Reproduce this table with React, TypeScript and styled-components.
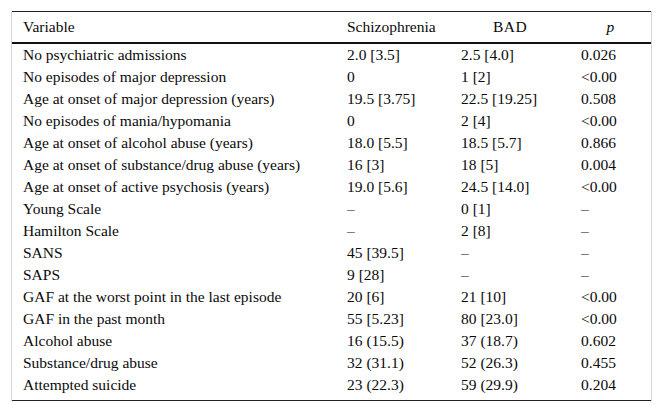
import styled, { createGlobalStyle } from "styled-components"

const GlobalStyle = createGlobalStyle`
    body{
        margin:0;
        background:#fff;
        font-family:"Liberation Serif", "Times New Roman", serif;
        color:#000;
    }
`

const Wrapper = styled.div`
    padding: 11px 11px 0 11px;
`

const Frame = styled.div`
    width: 641px;
    border-left: 1px solid #d4d4d4;
    border-right: 1px solid #d4d4d4;
    box-sizing: border-box;
`

const Table = styled.table`
    width: 100%;
    border-collapse: collapse;
    table-layout: fixed;
    font-family: "Liberation Serif", "Times New Roman", serif;
    font-size: 15.5px;
    line-height: 1;
    color: #0a0a0a;
    border-top: 1px solid #222;
    border-bottom: 1px solid #222;
`

const HeadCell = styled.th<{ $align?: string; $italic?: boolean }>`
    font-weight: normal;
    text-align: ${p => p.$align || "left"};
    font-style: ${p => (p.$italic ? "italic" : "normal")};
    height: 30px;
    padding: 0 11px;
    border-bottom: 2px solid #111;
    letter-spacing: ${p => (p.$align === "center" ? "0.5px" : "0")};
`

const Row = styled.tr`
    &:last-child td{
        padding-bottom: 4px;
    }
`

const Cell = styled.td`
    height: 22px;
    padding: 0 11px;
    white-space: nowrap;
`

const rows: [string, string, string, string][] = [
    ["No psychiatric admissions", "2.0 [3.5]", "2.5 [4.0]", "0.026"],
    ["No episodes of major depression", "0", "1 [2]", "<0.00"],
    ["Age at onset of major depression (years)", "19.5 [3.75]", "22.5 [19.25]", "0.508"],
    ["No episodes of mania/hypomania", "0", "2 [4]", "<0.00"],
    ["Age at onset of alcohol abuse (years)", "18.0 [5.5]", "18.5 [5.7]", "0.866"],
    ["Age at onset of substance/drug abuse (years)", "16 [3]", "18 [5]", "0.004"],
    ["Age at onset of active psychosis (years)", "19.0 [5.6]", "24.5 [14.0]", "<0.00"],
    ["Young Scale", "–", "0 [1]", "–"],
    ["Hamilton Scale", "–", "2 [8]", "–"],
    ["SANS", "45 [39.5]", "–", "–"],
    ["SAPS", "9 [28]", "–", "–"],
    ["GAF at the worst point in the last episode", "20 [6]", "21 [10]", "<0.00"],
    ["GAF in the past month", "55 [5.23]", "80 [23.0]", "<0.00"],
    ["Alcohol abuse", "16 (15.5)", "37 (18.7)", "0.602"],
    ["Substance/drug abuse", "32 (31.1)", "52 (26.3)", "0.455"],
    ["Attempted suicide", "23 (22.3)", "59 (29.9)", "0.204"],
]

export default function App(): JSX.Element {
    return (
        <Wrapper>
            <GlobalStyle />
            <Frame>
                <Table>
                    <colgroup>
                        <col style={{ width: 324 }} />
                        <col style={{ width: 114 }} />
                        <col style={{ width: 120 }} />
                        <col style={{ width: 81 }} />
                    </colgroup>
                    <thead>
                        <tr>
                            <HeadCell>Variable</HeadCell>
                            <HeadCell>Schizophrenia</HeadCell>
                            <HeadCell $align="center">BAD</HeadCell>
                            <HeadCell $align="center" $italic>p</HeadCell>
                        </tr>
                    </thead>
                    <tbody>
                        {rows.map(r => (
                            <Row key={r[0]}>
                                {r.map((c, i) => (
                                    <Cell key={i}>{c}</Cell>
                                ))}
                            </Row>
                        ))}
                    </tbody>
                </Table>
            </Frame>
        </Wrapper>
    )
}
